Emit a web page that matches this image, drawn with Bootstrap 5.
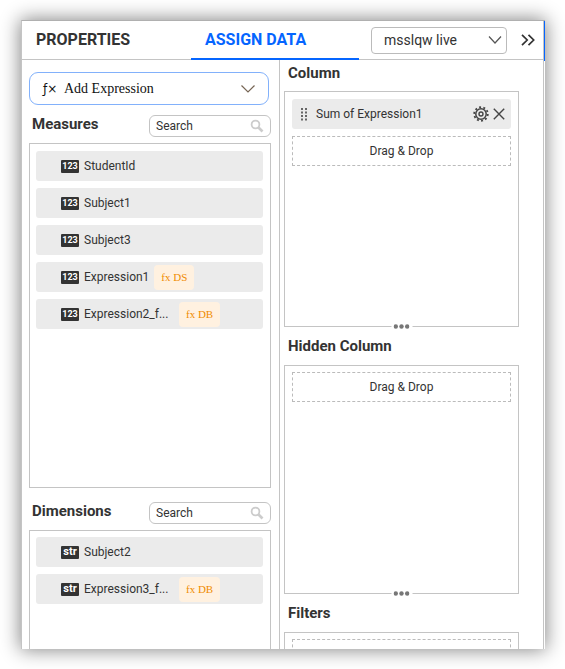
<!DOCTYPE html>
<html lang="en">
<head>
<meta charset="utf-8">
<meta name="viewport" content="width=device-width, initial-scale=1">
<title>Assign Data</title>
<link href="https://cdn.jsdelivr.net/npm/bootstrap@5.3.0/dist/css/bootstrap.min.css" rel="stylesheet">
<style>
:root { --line: #c4c4c4; --ink: #333; --blue: #0565ff; }
body { font-family: Roboto, sans-serif; font-size: 13px; line-height: 20px; color: var(--ink); background: #fff; padding: 20px 20px 20px 21px; }
.panel { height: calc(100vh - 40px); border: 1px solid var(--line); border-bottom: 0; border-right: 0; border-top-color: #b0b0b0; box-shadow: 0 0 18px 1px rgba(0,0,0,.48); background: #fff; }
.rail { width: 2px; border-left: 1px solid var(--line); }
.rail-active { height: 40px; background: var(--blue); }
.topbar { height: 39px; border-bottom: 1px solid var(--line); }
.tab { height: 39px; padding: 2px 14px 0; border: 0; border-bottom: 2px solid transparent; background: none; font-size: 16px; font-weight: 700; color: var(--ink); text-align: left; white-space: nowrap; }
.tab-first { width: 169px; }
.tab-active { width: 168px; color: var(--blue); border-bottom-color: var(--blue); }
.source { width: 136px; height: 27px; margin-left: 12px; padding: 0 24px 1px 12px; font-size: 14px; line-height: 20px; color: var(--ink); border: 1px solid #bbb; border-radius: 4px; appearance: none; background: transparent; }
.source-wrap { position: relative; }
.source-wrap svg { position: absolute; right: 5px; top: 8px; pointer-events: none; }
.plain { border: 0; padding: 0; background: none; color: inherit; display: inline-flex; }
.work { display: grid; grid-template-columns: 258fr 263fr; min-height: 0; }
.fields { padding: 12px 8px 0 7px; border-right: 1px solid var(--line); }
.wells { padding: 0 24px 0 4px; }
.add { height: 33px; margin-right: 2px; padding: 0 13px; border: 1px solid #82b1fb; border-radius: 9px; background: #fff; font-family: "Liberation Serif", serif; font-size: 14px; color: #111; }
.fx { width: 21px; font-family: "DejaVu Sans", sans-serif; font-size: 12px; text-align: left; }
.heading { font-size: 15px; line-height: 20px; font-weight: 700; margin: 0; }
.fields-head { height: 38px; padding: 0 0 0 3px; }
.find { position: relative; width: 122px; height: 22px; }
.find input { width: 100%; height: 22px; padding: 0 24px 0 6px; border: 1px solid #c4c4c4; border-radius: 6px; font-size: 12px; color: var(--ink); background: #fff; }
.find input::placeholder { color: #333; opacity: 1; }
.find svg { position: absolute; right: 7px; top: 4px; }
.box { border: 1px solid var(--line); padding: 7px 7px 0; }
.fields .box { padding-left: 6px; }
.box-open { border-bottom: 0; }
.measure-box { height: 345px; }
.column-box { height: 236px; }
.hidden-box { height: 229px; }
.hidden-box, .box-open { padding-top: 6px; }
.stack { display: flex; flex-direction: column; gap: 7px; }
.chip { height: 30px; border-radius: 3px; background: #ebebeb; font-size: 12px; }
.field-chip { padding-left: 25px; }
.well-chip { padding: 0 6px 0 8px; }
.kind { width: 18px; height: 13px; margin-right: 5px; border-radius: 1px; background: #333; color: #fff; font-size: 9px; line-height: 13px; font-weight: 700; text-align: center; }
.kind-str { font-size: 11px; line-height: 12px; }
.origin { height: 25px; margin-left: 5px; padding: 0 7px; border-radius: 4px; background: #fff1e0; color: #f08c00; font-family: "Liberation Serif", serif; font-size: 11px; line-height: 24px; }
.clipped { width: 90px; }
.well-title { padding: 3px 4px 8px; }
.well-title-gap { padding: 9px 4px 9px; }
.drop { height: 30px; border: 1px dashed #bbb; font-size: 12px; }
.grip { position: relative; height: 0; }
.grip button { position: absolute; left: 50%; top: -3px; transform: translateX(-50%); width: 21px; height: 6px; background: #fff; justify-content: center; }
</style>
</head>
<body>
<main class="panel d-flex">
  <div class="d-flex flex-column flex-grow-1 overflow-hidden">
    <header class="topbar d-flex align-items-center flex-shrink-0">
      <button class="tab tab-first" type="button">PROPERTIES</button>
      <button class="tab tab-active" type="button">ASSIGN DATA</button>
      <div class="source-wrap">
        <select class="source" aria-label="Data source"><option>msslqw live</option></select>
        <svg width="14" height="10" viewBox="0 0 14 10" fill="none" stroke="#555" stroke-width="1.2"><path d="M1 1.5l6 6.500 6-6.500"/></svg>
      </div>
      <button class="plain ms-auto me-2" type="button" aria-label="Collapse panel">
        <svg width="14" height="12" viewBox="0 0 14 12" fill="none" stroke="#333" stroke-width="1.7"><path d="M1 .8L6.200 6 1 11.200M7.500 .8L12.700 6 7.500 11.200"/></svg>
      </button>
    </header>
    <div class="work flex-grow-1">
      <section class="fields d-flex flex-column overflow-hidden">
        <button class="add d-flex align-items-center flex-shrink-0" type="button">
          <span class="fx">ƒ×</span><span>Add Expression</span>
          <svg class="ms-auto" width="14" height="8" viewBox="0 0 14 8" fill="none" stroke="#765" stroke-width="1.2"><path d="M.5 .5L7 7 13.500 .5"/></svg>
        </button>
        <div class="fields-head d-flex align-items-center justify-content-between flex-shrink-0">
          <h2 class="heading">Measures</h2>
          <div class="find mt-1">
            <input type="text" placeholder="Search" aria-label="Search measures">
            <svg width="14" height="14" viewBox="0 0 14 14" fill="none" stroke="#ccc"><circle cx="5.500" cy="5.500" r="3.900" stroke-width="1.800"/><path d="M8.500 8.500l4 4" stroke-width="2.600"/></svg>
          </div>
        </div>
        <div class="box measure-box stack flex-shrink-0">
          <div class="chip field-chip d-flex align-items-center"><span class="kind">123</span>StudentId</div>
          <div class="chip field-chip d-flex align-items-center"><span class="kind">123</span>Subject1</div>
          <div class="chip field-chip d-flex align-items-center"><span class="kind">123</span>Subject3</div>
          <div class="chip field-chip d-flex align-items-center"><span class="kind">123</span>Expression1<span class="origin">fx DS</span></div>
          <div class="chip field-chip d-flex align-items-center"><span class="kind">123</span><span class="clipped">Expression2_f...</span><span class="origin">fx DB</span></div>
        </div>
        <div class="fields-head d-flex align-items-center justify-content-between flex-shrink-0 mt-1">
          <h2 class="heading">Dimensions</h2>
          <div class="find mt-1">
            <input type="text" placeholder="Search" aria-label="Search dimensions">
            <svg width="14" height="14" viewBox="0 0 14 14" fill="none" stroke="#ccc"><circle cx="5.500" cy="5.500" r="3.900" stroke-width="1.800"/><path d="M8.500 8.500l4 4" stroke-width="2.600"/></svg>
          </div>
        </div>
        <div class="box box-open stack flex-grow-1">
          <div class="chip field-chip d-flex align-items-center"><span class="kind kind-str">str</span>Subject2</div>
          <div class="chip field-chip d-flex align-items-center"><span class="kind kind-str">str</span><span class="clipped">Expression3_f...</span><span class="origin">fx DB</span></div>
        </div>
      </section>
      <section class="wells overflow-hidden">
        <h2 class="heading well-title">Column</h2>
        <div class="box column-box stack">
          <div class="chip well-chip d-flex align-items-center">
            <svg class="me-1" width="8" height="13" viewBox="0 0 8 13" fill="#666"><path d="M1 0h2v2H1zM5 0h2v2H5zM1 3.500h2v2H1zM5 3.500h2v2H5zM1 7h2v2H1zM5 7h2v2H5zM1 10.500h2v2H1zM5 10.500h2v2H5z"/></svg>
            <span class="ms-1">Sum of Expression1</span>
            <button class="plain ms-auto" type="button" aria-label="Settings">
              <svg width="16" height="16" viewBox="0 0 16 16" fill="none" stroke="#444"><circle cx="8" cy="8" r="5.200" stroke-width="1.500"/><circle cx="8" cy="8" r="2" stroke-width="1.400"/><circle cx="8" cy="8" r="6.800" stroke-width="1.800" stroke-dasharray="2 2.273"/></svg>
            </button>
            <button class="plain ms-1" type="button" aria-label="Remove">
              <svg width="12" height="12" viewBox="0 0 12 12" stroke="#444" stroke-width="1.400"><path d="M.8 .8l10.400 10.400M11.200 .8L.8 11.200"/></svg>
            </button>
          </div>
          <div class="drop d-flex align-items-center justify-content-center">Drag &amp; Drop</div>
        </div>
        <div class="grip"><button class="plain" type="button" aria-label="Resize Column"><svg width="16" height="5" viewBox="0 0 16 5" fill="#777"><circle cx="2.300" cy="2.500" r="2.200"/><circle cx="8" cy="2.500" r="2.200"/><circle cx="13.700" cy="2.500" r="2.200"/></svg></button></div>
        <h2 class="heading well-title-gap">Hidden Column</h2>
        <div class="box hidden-box stack">
          <div class="drop d-flex align-items-center justify-content-center">Drag &amp; Drop</div>
        </div>
        <div class="grip"><button class="plain" type="button" aria-label="Resize Hidden Column"><svg width="16" height="5" viewBox="0 0 16 5" fill="#777"><circle cx="2.300" cy="2.500" r="2.200"/><circle cx="8" cy="2.500" r="2.200"/><circle cx="13.700" cy="2.500" r="2.200"/></svg></button></div>
        <h2 class="heading well-title-gap">Filters</h2>
        <div class="box box-open stack">
          <div class="drop"></div>
        </div>
      </section>
    </div>
  </div>
  <div class="rail flex-shrink-0"><div class="rail-active"></div></div>
</main>
<script src="https://cdn.jsdelivr.net/npm/bootstrap@5.3.0/dist/js/bootstrap.bundle.min.js"></script>
</body>
</html>
